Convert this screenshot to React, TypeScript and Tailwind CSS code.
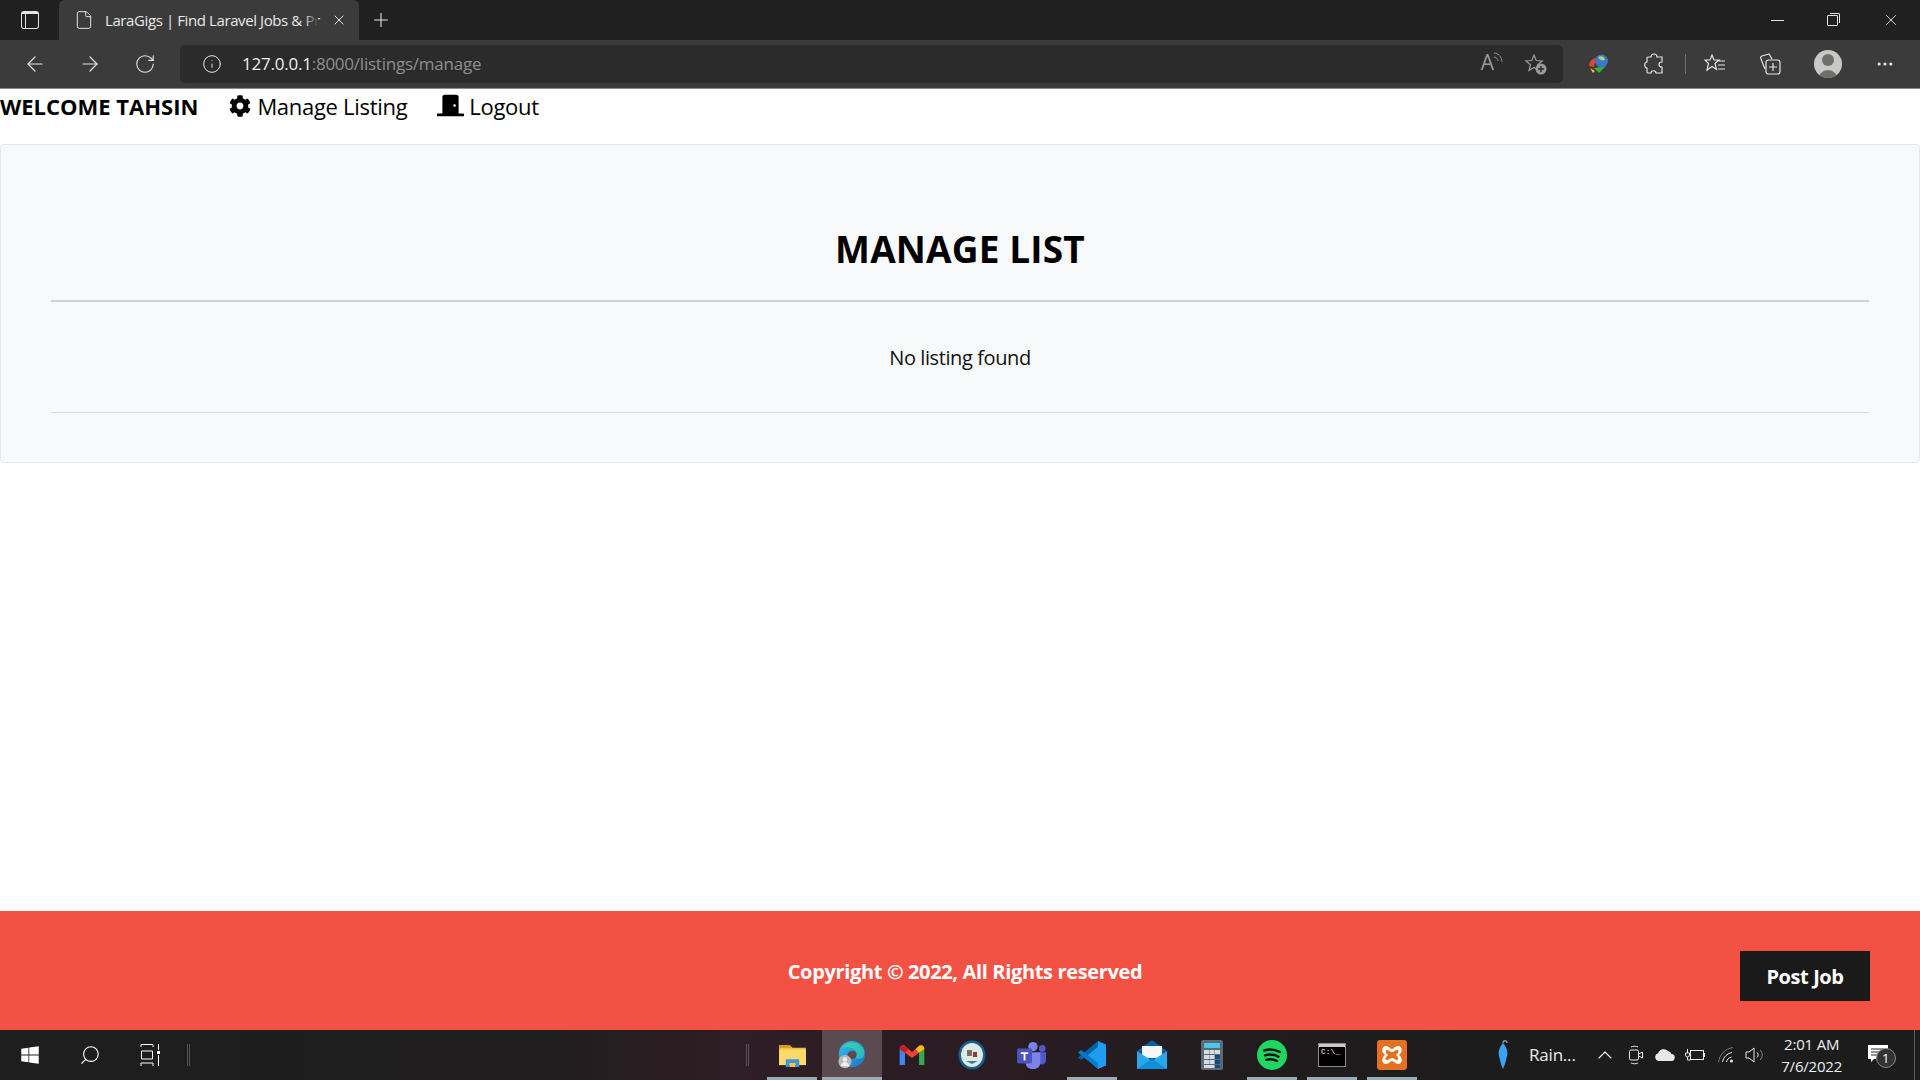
import { ArrowLeft, ArrowRight, ChevronUp, File, Info, MoreHorizontal, Plus, RotateCw, Search, X } from 'lucide-react';
import { FaCog, FaDoorClosed, FaWindows } from 'react-icons/fa';

const uiFont = "font-['Open_Sans',sans-serif]";

function EdgeIcon() {
  return (
    <svg width="30" height="30" viewBox="0 0 32 32">
      <defs>
        <linearGradient id="edgeA" x1="0" y1="0" x2="1" y2="1">
          <stop offset="0" stopColor="#35c1f1" />
          <stop offset="1" stopColor="#1b6fc2" />
        </linearGradient>
        <linearGradient id="edgeB" x1="0" y1="0" x2="1" y2="1">
          <stop offset="0" stopColor="#36d9a0" />
          <stop offset="1" stopColor="#2ab3c8" />
        </linearGradient>
      </defs>
      <circle cx="16" cy="15" r="14" fill="url(#edgeA)" />
      <path d="M5 9C9 2 21 0 27 8c4 6 2 12-3 12h-5c3-3 3-9-3-11C11 7 7 8 5 9z" fill="url(#edgeB)" />
      <path d="M11 17c0-5 6-7 9-4 2 3 0 7-3 7-3 1-6-1-6-3z" fill="#5a4a50" />
      <circle cx="8.5" cy="23" r="7" fill="#b9b9b9" />
      <circle cx="8.5" cy="20.8" r="2.3" fill="#eeeeee" />
      <path d="M4 28c0-3 2-4.6 4.5-4.6S13 25 13 28z" fill="#eeeeee" />
    </svg>
  );
}

function GmailIcon() {
  return (
    <svg width="28" height="22" viewBox="0 0 30 25">
      <path d="M1 6v18h6V10z" fill="#4285f4" />
      <path d="M23 10v14h6V6z" fill="#34a853" />
      <path d="M1 6c0-4 4-6 7-3l7 6 7-6c3-3 7-1 7 3l-6 4-8 6-8-6z" fill="#ea4335" />
      <path d="M23 10l6-4c0-4-4-6-7-3l-3 3z" fill="#fbbc04" />
      <path d="M1 6c0-4 4-6 7-3l3 3-4 4z" fill="#c5221f" />
    </svg>
  );
}

function BadgeIcon() {
  return (
    <svg width="28" height="30" viewBox="0 0 28 30">
      <ellipse cx="14" cy="15" rx="13.5" ry="14.5" fill="#16608f" />
      <ellipse cx="14" cy="15" rx="11" ry="12" fill="#dfe9e4" />
      <rect x="9" y="10" width="5" height="6" fill="#7b6f6a" />
      <rect x="15" y="12" width="4" height="5" fill="#8a3f3c" />
      <path d="M8 21h12l-6 3z" fill="#3d7a96" />
    </svg>
  );
}

function TeamsIcon() {
  return (
    <svg width="30" height="28" viewBox="0 0 32 30">
      <circle cx="17" cy="6" r="5" fill="#7b83eb" />
      <circle cx="27" cy="8" r="3.6" fill="#5059c9" />
      <path d="M22 12h9v9c0 3-3 5-6 4z" fill="#5059c9" />
      <path d="M9 12h16v11c0 4-3 7-8 7s-8-3-8-7z" fill="#7b83eb" />
      <rect x="0" y="8" width="16" height="16" rx="1.5" fill="#4b53bc" />
      <path d="M4 12h8v2H9v7H7v-7H4z" fill="#ffffff" />
    </svg>
  );
}

function VsCodeIcon() {
  return (
    <svg width="30" height="30" viewBox="0 0 30 30">
      <path d="M21 1l8 3.5v21L21 29 8 17l5-4z" fill="#1f9cf0" />
      <path d="M21 1v6L10 15.500 4 20l-3-2.500L21 1z" fill="#0065a9" />
      <path d="M1 12.500L4 10l6 4.500L21 23v6z" fill="#007acc" />
    </svg>
  );
}

function MailIcon() {
  return (
    <svg width="30" height="30" viewBox="0 0 30 30">
      <path d="M0 11L15 0l15 11-15 11z" fill="#0a5ea8" />
      <path d="M5 6h20v12H5z" fill="#f4f8fb" />
      <path d="M0 11l15 10 15-10v17a1 1 0 0 1-1 1H1a1 1 0 0 1-1-1z" fill="#28a8ea" />
      <path d="M0 29l15-10 15 10z" fill="#0f8fdc" />
    </svg>
  );
}

function CalcIcon() {
  return (
    <svg width="22" height="30" viewBox="0 0 22 30">
      <rect width="22" height="30" rx="2" fill="#5c6a75" />
      <rect x="3" y="3" width="16" height="5" fill="#4cc6e8" />
      {[10, 15, 20].map((y) =>
        [3, 8.5, 14].map((x) => <rect key={`${x}-${y}`} x={x} y={y} width="5" height="4" fill={x === 14 && y > 10 ? '#144a80' : '#d5dbe0'} />),
      )}
      <rect x="3" y="25" width="10.500" height="3" fill="#d5dbe0" />
      <rect x="14" y="25" width="5" height="3" fill="#144a80" />
    </svg>
  );
}

function SpotifyIcon() {
  return (
    <svg width="30" height="30" viewBox="0 0 30 30">
      <circle cx="15" cy="15" r="15" fill="#1ed760" />
      <path d="M7 10.5c5-1.5 11-1 16 1.5M8 15.3c4.500-1.300 9.500-.8 13.500 1.400M9 19.800c3.800-1 7.800-.6 11 1.200" fill="none" stroke="#131313" strokeWidth="2.400" strokeLinecap="round" />
    </svg>
  );
}

function CmdIcon() {
  return (
    <div className="flex h-[24px] w-[28px] flex-col border border-[#8b8b8b] bg-black">
      <div className="h-[3px] bg-[#c9c9c9]" />
      <span className="pl-[2px] font-['Liberation_Mono',monospace] text-[8px] leading-[10px] text-white">C:\_</span>
    </div>
  );
}

function XamppIcon() {
  return (
    <svg width="30" height="30" viewBox="0 0 30 30">
      <rect width="30" height="30" rx="3" fill="#e5701f" />
      <path d="M9 6c3 0 4 3 6 3s3-3 6-3c4 0 5 5 2 8l-1 1 1 1c3 3 2 8-2 8-3 0-4-3-6-3s-3 3-6 3c-4 0-5-5-2-8l1-1-1-1C4 11 5 6 9 6z" fill="#ffffff" />
      <path d="M10 10c2 0 3 2 5 2s3-2 5-2 2 2 0 4l-1 1 1 1c2 2 1 4 0 4-2 0-3-2-5-2s-3 2-5 2-2-2 0-4l1-1-1-1c-2-2-1-4 0-4z" fill="#e5701f" />
    </svg>
  );
}

function AppSlot({ children, open, active }: { children: React.ReactNode; open?: boolean; active?: boolean }) {
  return (
    <div className={`relative flex h-full w-[60px] items-center justify-center ${active ? 'bg-[#5b4a50]' : ''}`}>
      {children}
      {open && <div className={`absolute bottom-0 h-[3px] bg-[#9aabb6] ${active ? 'inset-x-0' : 'inset-x-[5px]'}`} />}
    </div>
  );
}

function BrowserChrome() {
  return (
    <div className="shrink-0">
      {/* Tab strip */}
      <div className="flex h-[40px] items-end bg-[#202020] text-[#e4e4e4]">
        <div className="flex h-[40px] w-[59px] items-center justify-center">
          <div className="h-[18px] w-[18px] rounded-[3px] border-[1.5px] border-[#e4e4e4] border-t-[3px] pr-[3px]">
            <div className="h-full w-[4px] border-r border-[#e4e4e4]" />
          </div>
        </div>
        <div className="flex h-[40px] w-[300px] items-center rounded-t-[6px] bg-[#3b3b3b] pl-[15px] pr-[12px]">
          <File size={20} strokeWidth={1.2} />
          <div className="relative ml-[11px] w-[213px]">
            <span className={`block whitespace-nowrap text-[15px] tracking-[-0.4px] text-[#e8e8e8] ${uiFont}`}>LaraGigs | Find Laravel Jobs &amp; Pr</span>
            <div className="absolute inset-y-0 right-0 w-[14px] bg-gradient-to-r from-transparent to-[#3b3b3b]" />
          </div>
          <X size={16} strokeWidth={1.5} className="ml-auto" />
        </div>
        <div className="flex h-[40px] w-[44px] items-center justify-center">
          <Plus size={22} strokeWidth={1.2} />
        </div>
        <div className="ml-auto flex h-[40px] items-center">
          <div className="flex w-[50px] justify-center">
            <div className="h-px w-[13px] bg-[#e4e4e4]" />
          </div>
          <div className="flex w-[60px] justify-center">
            <div className="relative h-[11px] w-[11px] rounded-[1px] border border-[#e4e4e4]">
              <div className="absolute -right-[3px] -top-[3px] h-[10px] w-[10px] rounded-tr-[2px] border-r border-t border-[#e4e4e4]" />
            </div>
          </div>
          <div className="flex w-[58px] justify-center">
            <X size={18} strokeWidth={1.2} />
          </div>
        </div>
      </div>

      {/* Toolbar */}
      <div className="flex h-[49px] items-start border-b border-[#8a8a8a] bg-[#3b3b3b] text-[#e4e4e4]">
        <div className="flex h-[48px] items-center pl-[7px]">
          <div className="flex w-[55px] justify-center"><ArrowLeft size={24} strokeWidth={1.2} /></div>
          <div className="flex w-[55px] justify-center"><ArrowRight size={24} strokeWidth={1.2} /></div>
          <div className="flex w-[55px] justify-center"><RotateCw size={22} strokeWidth={1.2} /></div>
        </div>
        <div className="ml-[8px] mt-[5px] flex h-[38px] w-[1383px] items-center rounded-[5px] bg-[#2b2b2b] pl-[22px] pr-[15px]">
          <Info size={20} strokeWidth={1.2} />
          <span className={`ml-[20px] text-[17px] tracking-[-0.23px] text-[#8f8f8f] ${uiFont}`}>
            <span className="text-[#f0f0f0]">127.0.0.1</span>:8000/listings/manage
          </span>
          <div className="ml-auto flex items-center gap-[30px] text-[#9a9a9a]">
            <div className="relative">
              <span className={`text-[21px] leading-none ${uiFont}`}>A</span>
              <svg width="10" height="12" viewBox="0 0 10 12" className="absolute -right-[9px] top-0" fill="none" stroke="#9a9a9a">
                <path d="M1 5c2 0 4 2 4 4M1 1c4 0 8 4 8 9" />
              </svg>
            </div>
            <svg width="24" height="24" viewBox="0 0 24 24" fill="none" stroke="#9a9a9a" strokeWidth="1.2">
              <path d="M10 3l2.200 5.500 6 .4-4.700 3.800 1.500 5.800L10 15.400 5 18.500l1.500-5.800L1.800 8.900l6-.4z" />
              <circle cx="17" cy="17" r="5.500" fill="#9a9a9a" stroke="none" />
              <path d="M17 14v6M14 17h6" stroke="#2b2b2b" strokeWidth="1.500" />
            </svg>
          </div>
        </div>
        <div className="flex h-[48px] items-center">
          <div className="flex w-[72px] justify-center">
            <svg width="22" height="20" viewBox="0 0 22 20">
              <path d="M1 12a9 9 0 0 1 6-8l3 3a6 6 0 0 0-4 6z" fill="#e5432f" />
              <path d="M6 14l12-2-7 7z" fill="#32b432" />
              <path d="M2 14l5 3-2 2z" fill="#f3c019" />
              <circle cx="13.500" cy="7" r="6.500" fill="#3977c9" />
              <path d="M10 3c3-2 7 0 7 3-3 1-6 0-7-3z" fill="#a6d273" />
            </svg>
          </div>
          <div className="flex w-[38px] justify-center">
            <svg width="20" height="22" viewBox="0 0 20 22" fill="none" stroke="#e4e4e4" strokeWidth="1.200">
              <path d="M7 4c0-4 6-4 6 0h5v5c-4 0-4 5 0 5v6h-6c0-3-5-3-5 0H4a1 1 0 0 1-1-1v-4c-3 0-3-6 0-6V5a1 1 0 0 1 1-1z" />
            </svg>
          </div>
          <div className="ml-[12px] h-[20px] w-px bg-[#6e6e6e]" />
          <div className="ml-[10px] flex w-[38px] justify-center">
            <svg width="22" height="22" viewBox="0 0 22 22" fill="none" stroke="#e4e4e4" strokeWidth="1.200">
              <path d="M8 2l2 5h5l-4 3.500 1.500 6L8 13.500 3 17l1.500-6.500L1 7h5zM15 8h6M14 12h7M14 16h7" />
            </svg>
          </div>
          <div className="ml-[17px] flex w-[38px] justify-center">
            <svg width="22" height="22" viewBox="0 0 22 22" fill="none" stroke="#e4e4e4" strokeWidth="1.200">
              <path d="M6 16L2 6a2 2 0 0 1 1-3l7-2 3 5" />
              <rect x="7" y="7" width="14" height="14" rx="2.500" />
              <path d="M14 10v8M10 14h8" />
            </svg>
          </div>
          <div className="ml-[25px] flex h-[28px] w-[28px] items-end justify-center overflow-hidden rounded-full bg-[#c9c8c4]">
            <div className="relative h-[24px] w-[20px]">
              <div className="mx-auto h-[12px] w-[12px] rounded-full bg-[#706e6b]" />
              <div className="absolute bottom-[-3px] h-[11px] w-[20px] rounded-t-full bg-[#706e6b]" />
            </div>
          </div>
          <div className="ml-[28px] flex w-[30px] justify-center"><MoreHorizontal size={20} strokeWidth={1.8} /></div>
        </div>
      </div>
    </div>
  );
}

function Taskbar() {
  return (
    <div className="flex h-[50px] shrink-0 items-center bg-[linear-gradient(90deg,#1e1e1e_0%,#1f1d1d_28%,#2f1e25_38%,#2a1c22_50%,#201c1e_68%,#1c1c1c_80%)] text-white">
      <div className="flex h-full w-[60px] items-center justify-center"><FaWindows size={20} /></div>
      <div className="flex h-full w-[60px] items-center justify-center"><Search size={22} strokeWidth={1.2} className="-scale-x-100" /></div>
      <div className="flex h-full w-[60px] items-center justify-center">
        <svg width="20" height="22" viewBox="0 0 20 22" fill="none" stroke="#ffffff">
          <path d="M1 3V.5h12V3M1.500 7h11v8h-11zM1 22v-3h12v3M18.500 0v6M18.500 11v11" />
          <rect x="17" y="7" width="3" height="3" fill="#ffffff" stroke="none" />
        </svg>
      </div>
      <div className="ml-[7px] h-[22px] w-[3px] border-x border-[#555555]" />
      <div className="ml-[556px] h-[22px] w-[3px] border-x border-[#555555]" />
      <div className="ml-[13px] flex h-full items-center">
        <AppSlot open>
          <svg width="27" height="23" viewBox="0 0 28 24">
            <path d="M0 1h11l3 3h14v18H0z" fill="#f0c34a" />
            <path d="M0 1h11l2 3H0z" fill="#d99a0b" />
            <path d="M0 6h28v16H0z" fill="#fbd96a" />
            <path d="M7 24v-8h14v8h-4v-4h-6v4z" fill="#3f97d8" />
            <path d="M11 20h6v4h-6z" fill="#f0c34a" />
          </svg>
        </AppSlot>
        <AppSlot open active><EdgeIcon /></AppSlot>
        <AppSlot><GmailIcon /></AppSlot>
        <AppSlot><BadgeIcon /></AppSlot>
        <AppSlot><TeamsIcon /></AppSlot>
        <AppSlot open><VsCodeIcon /></AppSlot>
        <AppSlot><MailIcon /></AppSlot>
        <AppSlot><CalcIcon /></AppSlot>
        <AppSlot open><SpotifyIcon /></AppSlot>
        <AppSlot open><CmdIcon /></AppSlot>
        <AppSlot open><XamppIcon /></AppSlot>
      </div>
      <div className="ml-[70px] flex w-[22px] justify-center">
        <svg width="12" height="30" viewBox="0 0 12 30">
          <path d="M6 3c0-3 4-3 4 0" fill="none" stroke="#8a8a8a" strokeWidth="1.500" />
          <path d="M6 3c4 5 5 9 4 13l-2 8-2 5-2-5-2-8C1 12 2 8 6 3z" fill="#3aa3f5" />
        </svg>
      </div>
      <span className={`ml-[15px] text-[17px] tracking-[-0.2px] text-[#eeeeee] ${uiFont}`}>Rain...</span>
      <div className="ml-[14px] flex w-[30px] justify-center"><ChevronUp size={24} strokeWidth={1.1} /></div>
      <div className="ml-[1px] flex w-[30px] justify-center">
        <svg width="16" height="20" viewBox="0 0 16 20" fill="none" stroke="#e8e8e8">
          <rect x="1.500" y="5" width="9" height="10" rx="1.500" />
          <path d="M10.500 9l4-2v6l-4-2M3 2c2-1 5-1 7 0M3 18c2 1 5 1 7 0" />
        </svg>
      </div>
      <div className="flex w-[29px] justify-center">
        <svg width="20" height="12" viewBox="0 0 20 12"><path d="M4 12a4 4 0 0 1-1-7.800A6 6 0 0 1 13 2a4.500 4.500 0 0 1 3.500 3A3.500 3.500 0 0 1 16 12z" fill="#e8e8e8" /></svg>
      </div>
      <div className="flex w-[31px] justify-center">
        <svg width="20" height="12" viewBox="0 0 20 12" fill="none" stroke="#e8e8e8">
          <rect x="5.500" y="1.500" width="13" height="9" />
          <path d="M2.500 0v4M.500 4h4v2a2 2 0 0 1-4 0zM2.500 8v3h3" />
          <rect x="18.500" y="4" width="1.500" height="4" fill="#e8e8e8" stroke="none" />
        </svg>
      </div>
      <div className="flex w-[31px] justify-center">
        <svg width="16" height="16" viewBox="0 0 16 16" fill="none" stroke="#e8e8e8">
          <path d="M.5 15C2 7 7 2 15 .5" stroke="#7a7a7a" />
          <path d="M4.500 15C5.500 10 9 6.500 14 5.500M8.500 15c.5-2.500 2-4 5-5" />
          <circle cx="13.500" cy="14" r="1.500" fill="#e8e8e8" stroke="none" />
        </svg>
      </div>
      <div className="flex w-[26px] justify-center">
        <svg width="20" height="16" viewBox="0 0 20 16" fill="none" stroke="#e8e8e8">
          <path d="M1 5h3l5-4v14l-5-4H1zM12 5.500c1.500 1.500 1.500 3.500 0 5" />
          <path d="M15 3c3 3 3 7 0 10" stroke="#8a8a8a" />
        </svg>
      </div>
      <div className={`ml-[11px] flex w-[66px] flex-col items-center text-[15px] leading-[22px] tracking-[-0.2px] text-[#eeeeee] ${uiFont}`}>
        <span>2:01 AM</span>
        <span>7/6/2022</span>
      </div>
      <div className="relative ml-[23px] h-[22px] w-[20px]">
        <svg width="20" height="18" viewBox="0 0 20 18" className="absolute top-[1px]">
          <path d="M0 0h20v14H6l-3 3v-3H0z" fill="#ffffff" />
          <path d="M3 4h13M3 7h13M3 10h13" stroke="#2a2a2a" />
        </svg>
        <div className={`absolute left-[8px] top-[4px] flex h-[20px] w-[20px] items-center justify-center rounded-full border border-[#8a8a8a] bg-[#333333] text-[13px] leading-none ${uiFont}`}>1</div>
      </div>
      <div className="ml-auto h-full w-[6px] border-l border-[#5a5a5a]" />
    </div>
  );
}

export default function App() {
  return (
    <div className={`flex h-screen flex-col overflow-hidden bg-white ${uiFont}`}>
      <BrowserChrome />

      {/* Page nav */}
      <nav className="flex h-[55px] shrink-0 items-start pt-[1px] text-[22px] leading-[32px] text-black">
        <span className="font-bold">WELCOME TAHSIN</span>
        <a className="ml-[31px] flex items-center tracking-[-0.3px]">
          <FaCog size={22} className="mr-[6px]" />
          Manage Listing
        </a>
        <a className="ml-[30px] flex items-center tracking-[-0.3px]">
          <FaDoorClosed size={27} className="mr-[5px] -translate-y-[1px]" />
          Logout
        </a>
      </nav>

      {/* Card */}
      <main className="flex-1">
        <section className="flex h-[319px] flex-col rounded-[4px] border border-[#e5e7eb] bg-[#f8f9fa] px-[50px] pt-[79px]">
          <h1 className="text-center text-[37px] font-bold leading-[50px] tracking-[0.15px] text-black">MANAGE LIST</h1>
          <div className="mt-[26px] h-[2px] bg-[#d2d3d6]" />
          <p className="mt-[42px] text-center text-[20px] leading-[28px] tracking-[-0.4px] text-[#111111]">No listing found</p>
          <div className="mt-[40px] h-px bg-[#d8d9dc]" />
        </section>
      </main>

      {/* Footer */}
      <footer className="relative flex h-[119px] shrink-0 items-center justify-center bg-[#f45145] pl-[10px] text-white">
        <p className="mb-[-2px] text-[20px] font-bold tracking-[-0.35px]">Copyright © 2022, All Rights reserved</p>
        <a className="absolute right-[50px] top-[40px] flex h-[50px] w-[130px] items-center justify-center bg-[#1a1a1a] pt-[2px] text-[20px] font-bold tracking-[-0.4px]">Post Job</a>
      </footer>

      <Taskbar />
    </div>
  );
}
